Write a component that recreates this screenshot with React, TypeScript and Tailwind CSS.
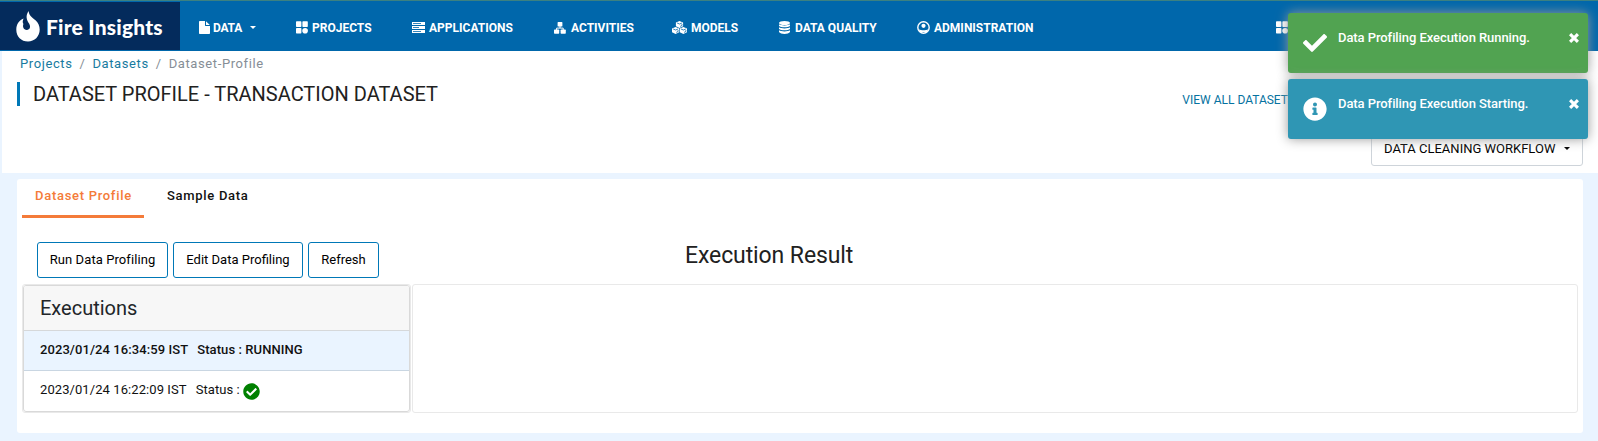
import React from "react";
import { FaCheckCircle, FaInfoCircle, FaCheck } from "react-icons/fa";

function Flame() {
  return (
    <svg viewBox="0 0 24 31" className="h-[31px] w-[24px] shrink-0" fill="#fff">
      <path d="M12.6 0C13 4.5 16 6.6 19.5 9.3C22.3 11.7 23.7 15 23.7 18.6C23.7 25.6 18.5 30.6 12 30.6C5.2 30.6 0.3 25.6 0.3 18.8C0.3 13.6 3 9.3 7.6 7.6C6.6 9.8 6.4 11.4 7.4 13C6.4 15.6 7.4 18.7 10.7 18.9C13.8 19 15 16 13.2 12.8C10.4 8.6 9.4 4.8 12.6 0Z" />
    </svg>
  );
}

function FileIcon() {
  return (
    <svg viewBox="0 0 11 13" className="h-[13px] w-[11px]" fill="#fff">
      <path d="M.8 0H6v4.6c0 .3.2.5.5.5H11v7.1c0 .5-.3.8-.8.8H.8c-.5 0-.8-.3-.8-.8V.8C0 .3.3 0 .8 0z" />
      <path d="M7 .2 10.8 4.1H7z" />
    </svg>
  );
}

function Widgets() {
  return (
    <svg viewBox="0 0 12 13" className="h-[13px] w-[12px]" fill="#fff">
      <rect x="0" y="0.3" width="5.4" height="5.7" rx=".7" />
      <rect x="6.4" y="0.3" width="5.4" height="5.7" rx=".7" />
      <rect x="0" y="7" width="5.4" height="5.5" rx=".7" />
      <circle cx="9.1" cy="9.7" r="2.8" />
    </svg>
  );
}

function Servers() {
  return (
    <svg viewBox="0 0 13 11" className="h-[11px] w-[13px]" fill="#fff">
      <path d="M0 0h13v3H0zM0 4h13v3H0zM0 8h13v3H0z" />
      <path d="M1 1.5h8M1 5.5h6M1 9.5h8" stroke="#0067ab" strokeWidth=".8" />
    </svg>
  );
}

function Sitemap() {
  return (
    <svg viewBox="0 0 12 12" className="h-3 w-3" fill="#fff">
      <rect x="3.6" y="0" width="4.8" height="4.6" rx=".7" />
      <rect x="0" y="7.6" width="5.2" height="4.2" rx=".7" />
      <rect x="6.6" y="7.6" width="5.2" height="4.2" rx=".7" />
      <path d="M6 4v2M2.6 8V6.1h6.6V8" fill="none" stroke="#fff" strokeWidth="1" />
    </svg>
  );
}

function Cube({ x, y }: { x: number; y: number }) {
  return (
    <g transform={`translate(${x} ${y})`}>
      <path d="M3.6 0 7.2 1.6V5.2L3.6 7 0 5.2V1.6z" fill="#fff" />
      <path d="M1.2 2 3.6 3 6 2M4.3 5.4 6.1 4.5V3.1" fill="none" stroke="#0067ab" strokeWidth=".8" />
    </g>
  );
}

function Cubes() {
  return (
    <svg viewBox="0 0 15 13" className="h-[13px] w-[15px]">
      <Cube x={3.9} y={0} />
      <Cube x={0} y={6} />
      <Cube x={7.8} y={6} />
    </svg>
  );
}

function Database() {
  return (
    <svg viewBox="0 0 11 13" className="h-[13px] w-[11px]" fill="#fff">
      <ellipse cx="5.5" cy="2" rx="5.5" ry="2" />
      <path d="M0 3.3c2 1.5 9 1.5 11 0v1.6c-1.6 1.9-9.400 1.900-11 0zM0 6.300c2 1.500 9 1.500 11 0v1.600c-1.600 1.900-9.400 1.900-11 0zM0 9.300c2 1.500 9 1.500 11 0v1.700c-1.600 2.500-9.400 2.500-11 0z" />
    </svg>
  );
}

function User() {
  return (
    <svg viewBox="0 0 13 13" className="h-[13px] w-[13px]" fill="none" stroke="#fff" strokeWidth="1.4">
      <circle cx="6.5" cy="6.5" r="5.7" />
      <circle cx="6.5" cy="4.8" r="2.1" fill="#fff" stroke="none" />
      <path d="M1.8 8.2c2.500 1.400 6.900 1.400 9.400 0L10 11H3z" fill="#fff" stroke="none" />
    </svg>
  );
}

function Close() {
  return (
    <svg viewBox="0 0 10 10" className="mt-5 h-[10px] w-[10px]" stroke="#fff" strokeWidth="3.1">
      <path d="M1.100 1.100 8.900 8.900M8.900 1.100 1.100 8.900" />
    </svg>
  );
}

function NavItem({ icon, label, box, text }: { icon: React.ReactNode; label: string; box: string; text: string }) {
  return (
    <a className={"flex shrink-0 items-center " + box}>
      {icon}
      <span className={"whitespace-nowrap text-[12px] font-bold " + text}>{label}</span>
    </a>
  );
}

function Toast({ color, icon, label }: { color: string; icon: React.ReactNode; label: string }) {
  return (
    <div className={"flex h-[60px] w-[300px] rounded-[3px] pl-[15px] text-white shadow-[0_0_12px_#999] " + color}>
      <div className="flex w-6 items-center">{icon}</div>
      <div className="ml-[11px] mt-[15px] w-[231px] whitespace-nowrap text-[13px] font-medium leading-5 tracking-[-0.07px]">{label}</div>
      <Close />
    </div>
  );
}

export default function App() {
  return (
    <div className="relative flex h-[441px] w-[1598px] flex-col overflow-hidden bg-[#eaf4ff] font-['Roboto',sans-serif] text-[#212529]">
      <header className="flex h-[51px] shrink-0 items-stretch border-t border-[#3c8181] bg-[#0067ab] text-white">
        <div className="mb-px mt-px flex w-[180px] items-center bg-[#042b5c] pl-4">
          <Flame />
          <span className="ml-[6px] mt-[2px] whitespace-nowrap font-['Lato',sans-serif] text-[21px] font-black tracking-[0.2px]">Fire Insights</span>
        </div>
        <nav className="flex grow items-center pl-[19px] pt-[3px]">
          <NavItem icon={<FileIcon />} label="DATA" box="w-[51px] gap-[3px]" text="tracking-[-0.2px]" />
          <span className="mr-[40px] h-0 w-0 shrink-0 border-x-[3px] border-t-[3px] border-x-transparent border-t-white" />
          <NavItem icon={<Widgets />} label="PROJECTS" box="w-[116px] gap-1" text="" />
          <NavItem icon={<Servers />} label="APPLICATIONS" box="w-[142px] gap-1" text="" />
          <NavItem icon={<Sitemap />} label="ACTIVITIES" box="w-[118px] gap-[5px]" text="" />
          <NavItem icon={<Cubes />} label="MODELS" box="w-[107px] gap-1" text="" />
          <NavItem icon={<Database />} label="DATA QUALITY" box="w-[138px] gap-[5px]" text="" />
          <NavItem icon={<User />} label="ADMINISTRATION" box="w-[359px] gap-1" text="" />
          <Widgets />
        </nav>
      </header>
      <section className="ml-[2px] h-[122px] shrink-0 bg-white pl-[15px]">
        <div className="flex h-[25px] items-center gap-[7px] pl-[3px] text-[13px] tracking-[0.6px] text-[#868e96]">
          <a className="text-[#187ba0]">Projects</a><span>/</span><a className="text-[#187ba0]">Datasets</a><span>/</span><span>Dataset-Profile</span>
        </div>
        <div className="flex justify-between">
          <h1 className="mt-[6px] flex h-6 items-center whitespace-nowrap border-l-[3px] border-[#0078b7] pl-[13px] text-[20px] text-[#212121]">DATASET PROFILE - TRANSACTION DATASET</h1>
          <a className="mr-[303px] mt-[14px] whitespace-nowrap text-[12px] leading-5 text-[#0672a0]">VIEW ALL DATASETS</a>
        </div>
        <div className="mr-[15px] flex justify-end">
          <button className="mt-[21px] flex h-[35px] w-[212px] items-center rounded-[3px] border border-[#ced4da] pl-3 text-[13px] text-black">
            <span className="whitespace-nowrap">DATA CLEANING WORKFLOW</span>
            <span className="ml-[9px] border-x-[3px] border-t-[3px] border-x-transparent border-t-black" />
          </button>
        </div>
      </section>
      <main className="ml-[17px] mt-[6px] h-[254px] w-[1566px] shrink-0 rounded-[3px] bg-white pl-[5px]">
        <div className="flex h-[39px] text-[13px] font-medium tracking-[0.7px]">
          <div className="w-[122px] whitespace-nowrap border-b-[3px] border-[#f47b39] pl-[13px] pt-[7px] leading-5 text-[#f47b39]">Dataset Profile</div>
          <div className="ml-[23px] whitespace-nowrap pt-[7px] leading-5 text-[#111]">Sample Data</div>
        </div>
        <div className="flex h-[66px] pl-[15px] pt-6 text-[13px] text-black">
          <button className="h-9 w-[131px] whitespace-nowrap rounded-[3px] border border-[#0078b7] tracking-[0.08px]">Run Data Profiling</button>
          <button className="ml-[5px] h-9 w-[130px] rounded-[3px] border border-[#0078b7]">Edit Data Profiling</button>
          <button className="ml-[5px] h-9 w-[71px] rounded-[3px] border border-[#0078b7]">Refresh</button>
          <h2 className="ml-[306px] whitespace-nowrap text-[23px] leading-[27px] tracking-[-0.1px] text-[#212121]">Execution Result</h2>
        </div>
        <div className="flex h-[129px]">
          <div className="h-[129px] w-[389px] rounded-[3px] border border-[#e9e9e9]">
            <div className="flex h-[127px] flex-col overflow-hidden rounded-[3px] border border-[#d9d9d9]">
              <h3 className="flex h-[45px] shrink-0 items-center border-b border-[#d6d8da] bg-[#f7f7f7] pl-4 text-[20px]">Executions</h3>
              <div className="flex h-10 shrink-0 items-center gap-[9px] border-b border-[#c9d6e2] bg-[#eaf4ff] pb-[2px] pl-4 text-[13px] font-medium tracking-[0.08px] text-[#111]"><span>2023/01/24 16:34:59 IST</span><span>Status : RUNNING</span></div>
              <div className="flex h-10 items-center pb-[2px] pl-4 text-[13px] tracking-[0.08px] text-[#111]"><span className="mr-[9px]">2023/01/24 16:22:09 IST</span><span>Status :</span><FaCheckCircle className="ml-[3px] mt-[2px] h-[17px] w-[17px] text-[#008000]" /></div>
            </div>
          </div>
          <div className="ml-px h-[129px] w-[1166px] rounded-[3px] border border-[#e9e9e9]" />
        </div>
      </main>
      <aside className="absolute left-[1288px] top-[13px] flex flex-col gap-[6px]">
        <Toast color="bg-[#51a351]" icon={<FaCheck className="h-6 w-6" />} label="Data Profiling Execution Running." />
        <Toast color="bg-[#2f96b4]" icon={<FaInfoCircle className="h-6 w-6" />} label="Data Profiling Execution Starting." />
      </aside>
    </div>
  );
}
